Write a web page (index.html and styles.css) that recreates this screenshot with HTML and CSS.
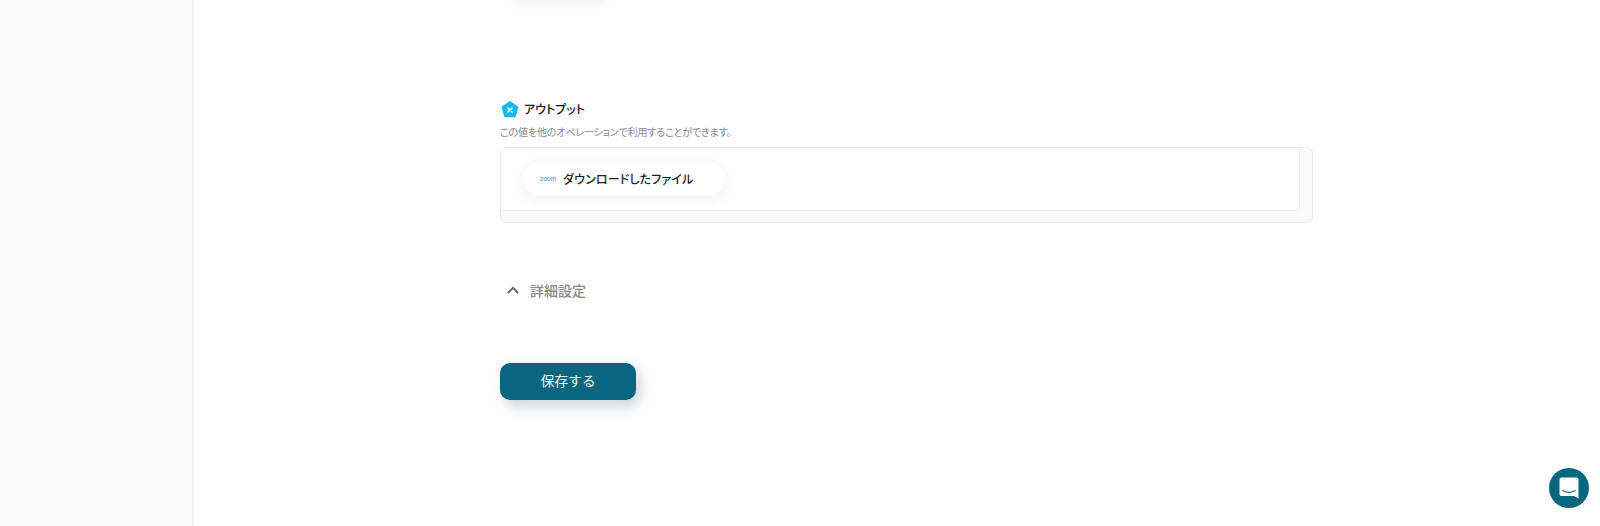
FILE: index.html
```html
<!doctype html>
<html lang="ja"><head>
    <meta charset="utf-8">
    <title>アウトプット</title>
    <link rel="stylesheet" href="styles.css">
</head>
<body>
    <div class="sidebar"></div>

    <div class="main">
        <div class="prev-shadow"></div>

        <div class="title-row">
            <svg class="title-icon" width="18" height="18" viewBox="0 0 18 18">
                <path d="M9 1 16.400 6.300 13.800 15.300 4.200 15.300 1.600 6.300Z" fill="#16b9ea" stroke="#16b9ea" stroke-width="2" stroke-linejoin="round"/>
                <path d="M6.900 6.900 11.100 11.100M11.100 6.900 6.900 11.100" stroke="#fff" stroke-width="1.400" stroke-linecap="round"/>
            </svg>
            <span class="title">アウトプット</span>
        </div>
        <div class="desc">この値を他のオペレーションで利用することができます。</div>

        <div class="output-box">
            <div class="output-inner">
                <div class="pill">
                    <span class="zoom-logo">zoom</span>
                    <span class="pill-label">ダウンロードしたファイル</span>
                </div>
            </div>
        </div>

        <div class="detail-row">
            <svg width="14" height="14" viewBox="0 0 14 14">
                <path d="M1.800 10 7 4.800 12.200 10" fill="none" stroke="#666" stroke-width="1.900"/>
            </svg>
            <span class="detail-label">詳細設定</span>
        </div>

        <button class="save-button">保存する</button>
    </div>

    <div class="chat-button">
        <svg width="20" height="22" viewBox="0 0 20 22">
            <path d="M2.500 .5H17.500A2 2 0 0 1 19.500 2.500V21.500L15 19H2.500A2 2 0 0 1 .5 17V2.500A2 2 0 0 1 2.500 .5Z" fill="#fff"/>
            <path d="M3.800 13.500C7.500 15.800 12.500 15.800 16.200 13.500" fill="none" stroke="#0a667f" stroke-width="1.100" stroke-linecap="round"/>
        </svg>
    </div>
</body></html>
```

FILE: styles.css
```css
html, body {
    margin: 0;
    height: 526px;
    overflow: hidden;
}

body {
    display: flex;
    background: #fff;
    font-family: "Noto Sans CJK JP", "Noto Sans", sans-serif;
    font-feature-settings: "palt";
}

.sidebar {
    width: 192px;
    flex-shrink: 0;
    background: #fafafa;
    border-right: 2px solid #f2f2f2;
}

.main {
    width: 813px;
    margin-left: 306px;
}

/* 上のセクションのボタンの影だけが見えている */
.prev-shadow {
    width: 90px;
    height: 1px;
    margin: -1px 0 0 14px;
    box-shadow: 0 0 10px 2px rgba(10, 70, 80, 0.12);
}

.title-row {
    display: flex;
    align-items: center;
    gap: 5px;
    margin-top: 100px;
    height: 18px;
    padding-left: 1px;
}

.title-icon {
    margin-top: 2px;
}

.title {
    font-size: 12px;
    font-weight: 500;
    color: #111;
    position: relative;
    top: -1px;
}

.desc {
    font-size: 10px;
    line-height: 14px;
    letter-spacing: -0.15px;
    color: #888;
    margin-top: 7px;
}

.output-box {
    height: 76px;
    margin-top: 8px;
    box-sizing: border-box;
    background: #fafafa;
    border: 1px solid #ececec;
    border-radius: 6px;
    overflow: hidden;
}

.output-inner {
    height: 63px;
    width: 799px;
    box-sizing: border-box;
    padding: 15px 0 0 21px;
    background: #fff;
    border-right: 1px solid #ececec;
    border-bottom: 1px solid #ececec;
}

.pill {
    display: flex;
    align-items: center;
    width: 204px;
    height: 32px;
    box-sizing: border-box;
    padding: 0 0 1px 18px;
    background: #fff;
    border-radius: 16px;
    box-shadow: 0 3px 14px rgba(0, 0, 0, 0.07);
}

.zoom-logo {
    width: 23px;
    flex-shrink: 0;
    font-family: "Liberation Sans", sans-serif;
    font-size: 6.5px;
    color: #2d8cff;
}

.pill-label {
    font-size: 12px;
    font-weight: 500;
    letter-spacing: 0.15px;
    color: #222;
}

.detail-row {
    display: flex;
    align-items: center;
    gap: 10px;
    height: 20px;
    margin-top: 57px;
    padding-left: 6px;
}

.detail-label {
    font-size: 14px;
    font-weight: 500;
    color: #888;
}

.save-button {
    display: block;
    width: 136px;
    height: 37px;
    margin-top: 63px;
    padding: 0 0 3px;
    border: none;
    border-radius: 10px;
    background: #0a667f;
    color: #e8f0f2;
    font-family: inherit;
    font-size: 14px;
    letter-spacing: -0.2px;
    box-shadow: 4px 6px 14px rgba(10, 60, 80, 0.22);
}

.chat-button {
    position: fixed;
    left: 1549px;
    top: 468px;
    width: 40px;
    height: 40px;
    border-radius: 50%;
    background: #0a667f;
    display: flex;
    align-items: center;
    justify-content: center;
    box-shadow: 0 1px 6px rgba(0, 0, 0, 0.06);
}
```
